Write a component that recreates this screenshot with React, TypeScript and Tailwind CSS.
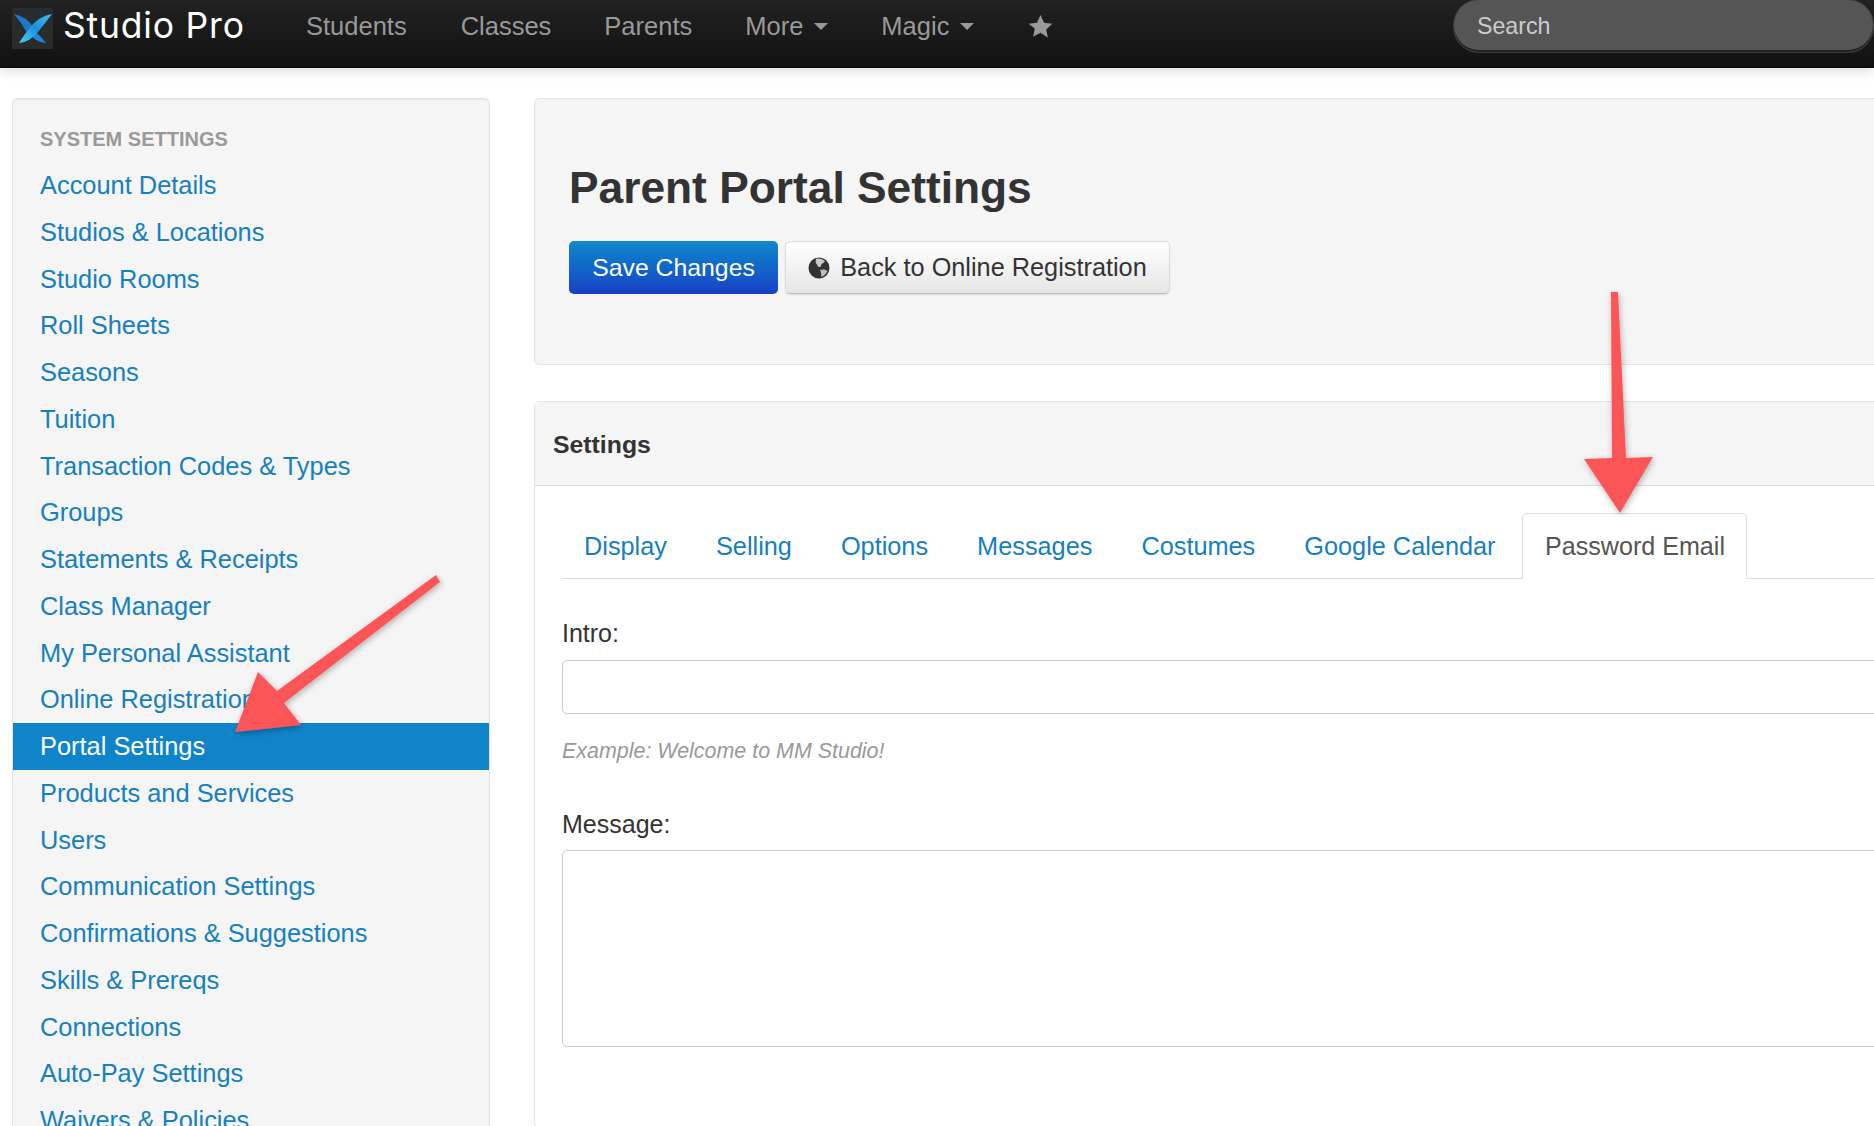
const sans = "font-['Liberation_Sans',Arial,sans-serif]";

const links = [
  "Account Details",
  "Studios & Locations",
  "Studio Rooms",
  "Roll Sheets",
  "Seasons",
  "Tuition",
  "Transaction Codes & Types",
  "Groups",
  "Statements & Receipts",
  "Class Manager",
  "My Personal Assistant",
  "Online Registration",
  "Portal Settings",
  "Products and Services",
  "Users",
  "Communication Settings",
  "Confirmations & Suggestions",
  "Skills & Prereqs",
  "Connections",
  "Auto-Pay Settings",
  "Waivers & Policies",
];

const tabs = ["Display", "Selling", "Options", "Messages", "Costumes", "Google Calendar"];

const Caret = () => (
  <span className="ml-[11px] mt-[1px] inline-block border-x-[7px] border-t-[7px] border-x-transparent border-t-[#999]" />
);

const Logo = () => (
  <svg viewBox="0 0 41 41" className="h-[41px] w-[41px] shrink-0 bg-[#2a2b2c]">
    <defs>
      <linearGradient id="blade" x1="1" y1="0" x2="0" y2="1">
        <stop offset="0" stopColor="#3cc0ee" />
        <stop offset="0.5" stopColor="#1c8fdc" />
        <stop offset="1" stopColor="#4fd0f0" />
      </linearGradient>
    </defs>
    <path d="M2 6 Q14 8 22 20 L15 25 Q9 14 2 6 Z" fill="#1a78c8" />
    <path d="M20 21 Q28 27 34 35 Q25 34 19 28 Z" fill="#1f86d6" />
    <path d="M40 6 Q26 8 16 22 Q10 30 7 35 Q18 34 26 24 Q34 14 40 6 Z" fill="url(#blade)" />
  </svg>
);

const Globe = () => (
  <svg viewBox="0 0 22 22" className="mr-[10px] h-[22px] w-[22px] shrink-0">
    <circle cx="11" cy="11" r="10.5" fill="#333" />
    <path d="M8 2 C11 1 15 2 17 4.5 C15.5 6.5 14 6 13 8 C13.5 10 11.5 10.5 10 9.5 C9.5 7.5 8 7 7.5 5 Z" fill="#c9c9c9" />
    <path d="M12 13 C15 12 18 12.5 19.5 14 C18 17 16 19 13.5 20 C13 18 13.5 16 12 13 Z" fill="#bdbdbd" />
  </svg>
);

export default function App() {
  return (
    <div className={`relative h-screen overflow-hidden bg-white text-[#333] ${sans}`}>
      <nav className="flex h-[68px] items-center overflow-hidden border-b border-[#0a0a0a] bg-gradient-to-b from-[#222] to-[#111] shadow-[0_4px_10px_rgba(0,0,0,0.12)]">
        <div className="mb-[11px] ml-[12px] flex w-[294px] items-center">
          <Logo />
          <span className="-mt-[5px] ml-[10px] font-['Inter',sans-serif] text-[35.5px] leading-none tracking-[0.8px] text-white">
            Studio Pro
          </span>
        </div>
        <div className="mb-[15px] flex items-center text-[25.5px] text-[#999]">
          <span>Students</span>
          <span className="ml-[54px]">Classes</span>
          <span className="ml-[53px]">Parents</span>
          <span className="ml-[53px] flex items-center">More<Caret /></span>
          <span className="ml-[53px] flex items-center">Magic<Caret /></span>
          <svg viewBox="0 0 24 24" className="ml-[54px] h-[25px] w-[25px] fill-[#999]">
            <path d="M12 1l3.4 7.3 8 1-5.9 5.5 1.6 7.9L12 17.9l-7.1 3.9 1.6-7.9L.6 9.3l8-1z" />
          </svg>
        </div>
        <div className="mb-[15px] ml-auto flex h-[54px] w-[421px] shrink-0 items-center rounded-[26px] border border-[#3a3a3a] bg-[#555] pl-[23px] text-[23.2px] text-[#ccc] shadow-[inset_0_-2px_0_#222]">
          Search
        </div>
      </nav>

      <div className="flex items-start pt-[30px]">
        <aside className="ml-[12px] h-[1100px] w-[478px] shrink-0 rounded-[5px] border border-[#e3e3e3] bg-[#f5f5f5] pt-[21px] shadow-[inset_0_1px_1px_rgba(0,0,0,0.05)]">
          <div className="pb-[4px] pl-[27px] text-[20px] font-bold leading-[38px] text-[#999]">SYSTEM SETTINGS</div>
          {links.map((link) => (
            <a
              key={link}
              className={`block h-[46.75px] pl-[27px] text-[25.4px] leading-[46.75px] ${
                link === "Portal Settings" ? "bg-[#0f84c8] text-white" : "text-[#1580bf]"
              }`}
            >
              {link}
            </a>
          ))}
        </aside>

        <main className="ml-[44px] w-[1500px] shrink-0">
          <section className="h-[267px] rounded-[5px] border border-[#e3e3e3] bg-[#f5f5f5] pl-[34px] pt-[61px]">
            <h1 className="text-[44.3px] font-bold leading-[55px]">Parent Portal Settings</h1>
            <div className="mt-[26px] flex gap-[7px]">
              <button className="flex h-[53px] w-[209px] items-center justify-center rounded-[5px] bg-gradient-to-b from-[#1588ca] to-[#1a3fc6] text-[24.8px] text-white">
                Save Changes
              </button>
              <button className="flex h-[53px] w-[385px] items-center justify-center rounded-[5px] border border-[#ddd] border-b-[#bbb] bg-gradient-to-b from-white to-[#e6e6e6] text-[25.3px] shadow-[0_1px_2px_rgba(0,0,0,0.1)]">
                <Globe />
                Back to Online Registration
              </button>
            </div>
          </section>

          <section className="mt-[36px] h-[727px] rounded-[5px] border border-[#e3e3e3]">
            <div className="flex h-[84px] items-center border-b border-[#ddd] bg-[#f5f5f5] pl-[18px] pt-[2px] text-[24.8px] font-bold">
              Settings
            </div>
            <div className="pl-[27px] pt-[27px]">
              <div className="flex h-[66px] items-end border-b border-[#ddd]">
                {tabs.map((tab, i) => (
                  <a
                    key={tab}
                    className={`mr-[3px] pb-[15px] pr-[23px] text-[25.3px] leading-[34px] text-[#1580bf] ${
                      i === 0 ? "pl-[22px]" : "pl-[23px]"
                    }`}
                  >
                    {tab}
                  </a>
                ))}
                <a className="-mb-[1px] flex h-[66px] w-[225px] items-center justify-center rounded-t-[5px] border border-[#ddd] border-b-white bg-white pl-[2px] pt-[2px] text-[25.1px] text-[#555]">
                  Password Email
                </a>
              </div>
              <label className="mt-[37px] block text-[25px] leading-[34px]">Intro:</label>
              <div className="mt-[10px] h-[54px] rounded-[5px] border border-[#ccc] bg-white" />
              <p className="mt-[20px] text-[21.45px] italic leading-[34px] text-[#999]">Example: Welcome to MM Studio!</p>
              <label className="mt-[39px] block text-[25px] leading-[34px]">Message:</label>
              <div className="mt-[9px] h-[197px] rounded-[5px] border border-[#ccc] bg-white" />
            </div>
          </section>
        </main>
      </div>

      {/* annotation arrows sit on top of the page */}
      <svg className="pointer-events-none absolute left-0 top-0 h-[1126px] w-[1874px]" viewBox="0 0 1874 1126">
        <defs>
          <filter id="arrowShadow" x="-20%" y="-20%" width="140%" height="140%">
            <feDropShadow dx="1" dy="2" stdDeviation="3" floodColor="#000" floodOpacity="0.3" />
          </filter>
        </defs>
        <g fill="#fb5558" filter="url(#arrowShadow)">
          <path d="M436 575 L440 582 L284 703 L301 725 L235 732 L258 672 L277 691 Z" />
          <path d="M1611 292 L1618 292 L1626 458 L1653 457 L1620 513 L1584 459 L1612 458 Z" />
        </g>
      </svg>
    </div>
  );
}
